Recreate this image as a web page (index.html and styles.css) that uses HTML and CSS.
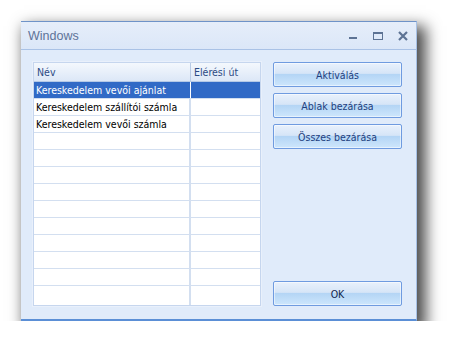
FILE: index.html
```html
<!DOCTYPE html>
<html lang="hu">
<head>
    <meta charset="UTF-8">
    <title>Windows</title>
    <link rel="stylesheet" href="styles.css">
</head>
<body>
    <div class="stage">
        <div class="window">
            <div class="titlebar">
                <span class="title">Windows</span>
                <div class="caption-btns">
                    <svg class="cap" width="12" height="10" viewBox="0 0 12 10"><rect x="2" y="6" width="8" height="2" fill="#5d7394"/></svg>
                    <svg class="cap" width="12" height="10" viewBox="0 0 12 10"><rect x="1.5" y="1.5" width="9" height="7" fill="none" stroke="#5d7394"/><rect x="1" y="1" width="10" height="2" fill="#5d7394"/></svg>
                    <svg class="cap" width="12" height="10" viewBox="0 0 12 10"><path d="M2 1 L10 9 M10 1 L2 9" stroke="#5d7394" stroke-width="2.2"/></svg>
                </div>
            </div>

            <div class="content">
                <div class="grid">
                    <div class="row head">
                        <div class="cell c1">Név</div>
                        <div class="cell c2">Elérési út</div>
                    </div>
                    <div class="row selected">
                        <div class="cell c1">Kereskedelem vevői ajánlat</div>
                        <div class="cell c2"></div>
                    </div>
                    <div class="row">
                        <div class="cell c1">Kereskedelem szállítói számla</div>
                        <div class="cell c2"></div>
                    </div>
                    <div class="row">
                        <div class="cell c1">Kereskedelem vevői számla</div>
                        <div class="cell c2"></div>
                    </div>
                    <div class="row"><div class="cell c1"></div><div class="cell c2"></div></div>
                    <div class="row"><div class="cell c1"></div><div class="cell c2"></div></div>
                    <div class="row"><div class="cell c1"></div><div class="cell c2"></div></div>
                    <div class="row"><div class="cell c1"></div><div class="cell c2"></div></div>
                    <div class="row"><div class="cell c1"></div><div class="cell c2"></div></div>
                    <div class="row"><div class="cell c1"></div><div class="cell c2"></div></div>
                    <div class="row"><div class="cell c1"></div><div class="cell c2"></div></div>
                    <div class="row"><div class="cell c1"></div><div class="cell c2"></div></div>
                    <div class="row"><div class="cell c1"></div><div class="cell c2"></div></div>
                    <div class="row last"><div class="cell c1"></div><div class="cell c2"></div></div>
                </div>

                <div class="actions">
                    <button class="btn">Aktiválás</button>
                    <button class="btn">Ablak bezárása</button>
                    <button class="btn">Összes bezárása</button>
                    <button class="btn btn-ok">OK</button>
                </div>
            </div>
        </div>
    </div>
</body>
</html>
```

FILE: styles.css
```css
* {
    box-sizing: border-box;
}
body {
    margin: 0;
    background: #ffffff;
    font-family: "DejaVu Sans Condensed", "DejaVu Sans", sans-serif;
    font-stretch: condensed;
    font-size: 10.5px;
}
.stage {
    padding: 21px 0 0 21px;
}
.window {
    width: 396px;
    height: 300px;
    background: #e0ebfa;
    border-top: 1px solid #6f93c8;
    border-right: 1px solid #a7c1e6;
    border-bottom: 2px solid #5b8fd6;
    box-shadow: 6px 8px 14px 3px rgba(0, 0, 0, 0.7);
    display: flex;
    flex-direction: column;
}
.titlebar {
    flex-shrink: 0;
    height: 28px;
    border-bottom: 1px solid #a9c2e6;
    background: linear-gradient(#e6eefa, #dbe7f8);
    display: flex;
    align-items: center;
    justify-content: space-between;
    padding: 0 7px 0 7px;
}
.title {
    font-family: "Liberation Sans", Arial, sans-serif;
    font-stretch: normal;
    font-size: 12.5px;
    color: #5e7398;
    margin-top: 1px;
}
.caption-btns {
    display: flex;
    gap: 13px;
    margin-top: 1px;
}
.content {
    flex: 1;
    display: flex;
    padding: 12px 13px 13px 12px;
    gap: 12px;
}
.grid {
    width: 228px;
    height: 244px;
    border: 1px solid #c6d6ee;
    background: #ffffff;
    display: flex;
    flex-direction: column;
    box-shadow: 0 0 0 1px #e9f0fb;
}
.row {
    display: flex;
    height: 17px;
    flex-shrink: 0;
    border-bottom: 1px solid #d3dff0;
}
.row.last {
    flex: 1;
    border-bottom: none;
}
.cell {
    line-height: 16px;
    padding-left: 2px;
    white-space: nowrap;
    overflow: hidden;
    color: #000000;
}
.c1 {
    width: 157px;
    border-right: 2px solid #d3dff0;
}
.c2 {
    flex: 1;
}
.row.head {
    height: 19px;
    background: linear-gradient(#f4f8fd, #dce7f7);
    border-bottom: 1px solid #b5c9e6;
}
.row.head .cell {
    color: #2c4a84;
    line-height: 18px;
    padding-left: 3px;
}
.row.head .c1 {
    border-right: 1px solid #b8cbe6;
}
.row.selected {
    background: #316ac6;
}
.row.selected .cell {
    color: #ffffff;
}
.row.selected .c1 {
    border-right: 1px solid #ffffff;
}
.actions {
    width: 129px;
    display: flex;
    flex-direction: column;
    gap: 6px;
}
.btn {
    height: 25px;
    flex-shrink: 0;
    border: 1px solid #6f9be0;
    border-radius: 2px;
    background: linear-gradient(#e9f1fc 0%, #d6e5f7 45%, #b4d5f5 50%, #cde6fc 100%);
    color: #1f3f7e;
    font-family: "DejaVu Sans Condensed", "DejaVu Sans", sans-serif;
    font-stretch: condensed;
    font-size: 10.5px;
    padding: 0;
    cursor: pointer;
    box-shadow: inset 0 0 0 1px rgba(255, 255, 255, 0.5);
}
.btn-ok {
    margin-top: auto;
    color: #10254f;
}
```
